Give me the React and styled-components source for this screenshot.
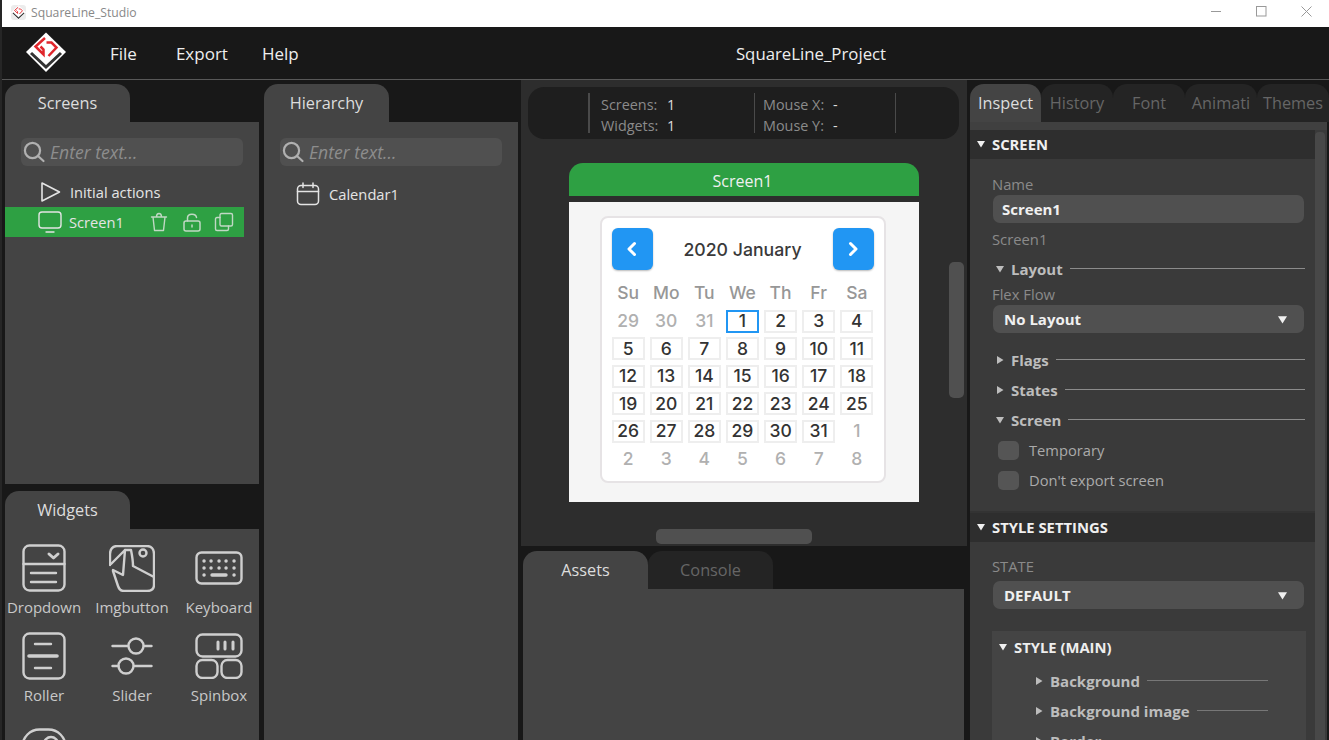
import React from "react";
import styled, { createGlobalStyle } from "styled-components";

const GlobalStyle = createGlobalStyle`
  html, body {
    margin: 0;
    padding: 0;
    height: 100%;
    overflow: hidden;
    background: #181818;
    font-family: "Open Sans", "Liberation Sans", sans-serif;
  }
  * { box-sizing: border-box; }
`;

const Window = styled.div`
  width: 1329px;
  height: 740px;
  display: flex;
  flex-direction: column;
  overflow: hidden;
  position: relative;
  border-left: 2px solid #262626;
`;

const TitleBar = styled.div`
  height: 27px;
  background: #fff;
  display: flex;
  align-items: center;
  padding-left: 9px;
  color: #888;
  font-size: 12.2px;
  flex: none;
`;

const TitleIcon = styled.div`
  width: 15px;
  height: 15px;
  border-radius: 3px;
  background: #ececec;
  margin-top: -3px;
  display: flex;
`;

const TitleText = styled.span`
  margin-left: 5px;
  margin-top: -2px;
`;

const WinButtons = styled.div`
  margin-left: auto;
  display: flex;
  align-items: center;
  color: #999;
`;

const WinButton = styled.svg`
  width: 11px;
  height: 11px;
  margin-right: ${(p) => p.$gap}px;
  margin-top: -5px;
  display: block;
`;

const MenuBar = styled.div`
  height: 53px;
  flex: none;
  background: #181818;
  border-bottom: 1px solid #585858;
  display: flex;
  align-items: center;
  position: relative;
  padding-left: 20px;
  color: #eee;
  font-size: 17px;
`;

const MenuItem = styled.span`
  margin-left: ${(p) => p.$left}px;
  margin-top: 1px;
`;

const ProjectName = styled.span`
  position: absolute;
  left: 291px;
  right: 0;
  top: 15px;
  text-align: center;
  font-size: 16.8px;
`;

const Main = styled.div`
  flex: 1;
  min-height: 0;
  display: flex;
  background: #181818;
`;

const SideColumn = styled.div`
  width: 254px;
  margin-left: ${(p) => p.$left}px;
  flex: none;
  display: flex;
  flex-direction: column;
  padding-top: 4px;
`;

const TabRow = styled.div`
  display: flex;
  height: 38px;
  flex: none;
  margin-top: ${(p) => p.$mt || 0}px;
`;

const Tab = styled.div`
  width: ${(p) => p.$w}px;
  height: 38px;
  flex: none;
  border-radius: 14px 14px 0 0;
  background: ${(p) => (p.$active ? "#444" : "#242424")};
  color: ${(p) => (p.$active ? "#ddd" : "#666")};
  display: flex;
  align-items: center;
  justify-content: center;
  font-size: 16.3px;
`;

const Panel = styled.div`
  background: #444;
  height: ${(p) => (p.$h ? `${p.$h}px` : "auto")};
  flex: ${(p) => (p.$h ? "none" : 1)};
  overflow: hidden;
  min-height: 0;
`;

const SearchBox = styled.div`
  margin: 16px 16px 0;
  height: 28px;
  border-radius: 6px;
  background: #505050;
  display: flex;
  align-items: center;
  padding-left: 1px;
  color: #8d8d8d;
  font-style: italic;
  font-size: 17.6px;
`;

const SearchText = styled.span`
  margin-left: 4px;
  margin-top: -1px;
`;

const TreeRow = styled.div`
  height: 30px;
  display: flex;
  align-items: center;
  margin-top: ${(p) => p.$mt || 0}px;
  padding-left: ${(p) => p.$pl}px;
  color: #e4e4e4;
  font-size: 14.7px;
  width: 239px;
  background: ${(p) => (p.$selected ? "#2ea043" : "transparent")};
`;

const TreeLabel = styled.span`
  margin-left: ${(p) => p.$left}px;
`;

const RowIcons = styled.div`
  margin-left: auto;
  display: flex;
  gap: 12.5px;
  padding-right: 10px;
  color: #c0d8c4;
`;

const WidgetGrid = styled.div`
  display: grid;
  grid-template-columns: 78px 98px 76px;
  grid-auto-rows: 88px;
  padding-top: 15px;
`;

const WidgetCell = styled.div`
  display: flex;
  flex-direction: column;
  align-items: center;
  color: #c8c8c8;
  font-size: 15px;
`;

const IconSlot = styled.div`
  height: 48px;
  flex: none;
  display: flex;
  align-items: center;
  justify-content: center;
  margin-top: ${(p) => p.$top || 0}px;
  color: #cfcfcf;
`;

const WidgetLabel = styled.span`
  margin-top: 5px;
  line-height: 20px;
  white-space: nowrap;
`;

const Center = styled.div`
  width: 446px;
  margin-left: 3px;
  flex: none;
  display: flex;
  flex-direction: column;
`;

const Canvas = styled.div`
  height: 466px;
  flex: none;
  background: #2d2d2d;
  position: relative;
  display: flex;
  flex-direction: column;
  align-items: center;
  padding: 7px 8px 0 7px;
`;

const StatusPill = styled.div`
  align-self: stretch;
  height: 52px;
  flex: none;
  border-radius: 16px;
  background: #1e1e1e;
  display: flex;
  align-items: center;
  padding-left: 60px;
  color: #8b8b8b;
  font-size: 14.4px;
`;

const StatusGroup = styled.div`
  height: 40px;
  border-left: ${(p) => (p.$thin ? 1 : 2)}px solid #4a4a4a;
  ${(p) => p.$end && "border-right: 1px solid #4a4a4a;"}
  width: ${(p) => p.$w}px;
  padding-left: ${(p) => p.$pl}px;
  padding-top: 4px;
  display: grid;
  grid-template-columns: ${(p) => p.$label}px 1fr;
  grid-auto-rows: 21px;
  align-content: center;
  line-height: 21px;
`;

const StatusValue = styled.span`
  color: #ddd;
`;

const ScreenFrame = styled.div`
  width: 350px;
  margin-top: 24px;
`;

const ScreenHeader = styled.div`
  height: 33px;
  background: #2ea043;
  border-radius: 14px 14px 0 0;
  color: #f0f0f0;
  font-size: 16px;
  padding: 2px 2px 0 0;
  display: flex;
  align-items: center;
  justify-content: center;
`;

const ScreenBody = styled.div`
  margin-top: 6px;
  height: 300px;
  background: #f5f5f5;
  padding: 14px 33px 0 31px;
`;

const CalendarCard = styled.div`
  height: 267px;
  background: #fff;
  border: 2px solid #e6e3e5;
  border-radius: 8px;
  padding: 10px 10px 0;
  font-family: Inter, "Noto Sans", sans-serif;
`;

const CalendarHead = styled.div`
  display: flex;
  align-items: center;
  justify-content: space-between;
  height: 42px;
  color: #3a3a3a;
  font-size: 17.7px;
  font-weight: 500;
`;

const CalendarTitle = styled.span`
  padding-top: 1px;
`;

const NavButton = styled.div`
  width: 41px;
  height: 42px;
  border-radius: 6px;
  background: #2196f3;
  box-shadow: 0 1px 2px #b9b9b9;
  display: flex;
  align-items: center;
  justify-content: center;
  color: #fff;
`;

const DayGrid = styled.div`
  display: grid;
  grid-template-columns: repeat(7, 33.14px);
  column-gap: 5px;
  grid-auto-rows: 23px;
  row-gap: 4.5px;
`;

const WeekRow = styled(DayGrid)`
  margin-top: 13px;
  margin-bottom: 6.5px;
  height: 20px;
`;

const WeekDay = styled.span`
  text-align: center;
  color: #979797;
  font-size: 17.5px;
  font-weight: 500;
  line-height: 20px;
`;

const DayCell = styled.div`
  border: ${(p) => (p.$today ? "2px solid #2196f3" : p.$muted ? "0" : "2px solid #eee")};
  color: ${(p) => (p.$muted ? "#b0b0b0" : "#333")};
  font-size: 17.5px;
  font-weight: 500;
  line-height: 1;
  display: flex;
  align-items: center;
  justify-content: center;
`;

const VScroll = styled.div`
  position: absolute;
  left: 428px;
  top: 182px;
  width: 15px;
  height: 136px;
  background: #505050;
  border-radius: 5px;
`;

const HScroll = styled.div`
  position: absolute;
  left: 135px;
  top: 449px;
  width: 156px;
  height: 15px;
  background: #505050;
  border-radius: 5px;
`;

const BottomArea = styled.div`
  flex: 1;
  min-height: 0;
  padding: 5px 3px 0 2px;
  display: flex;
  flex-direction: column;
`;

const Inspector = styled.div`
  flex: 1;
  min-width: 0;
  margin-left: 3px;
  padding-top: 4px;
  display: flex;
  flex-direction: column;
  position: relative;
`;

const InspectBody = styled.div`
  flex: 1;
  min-height: 0;
  background: #3a3a3a;
  border-top: 8px solid #404040;
  overflow: hidden;
  width: 357px;
`;

const SectionBar = styled.div`
  height: 29px;
  background: #2e2e2e;
  display: flex;
  align-items: center;
  color: #f0f0f0;
  font-weight: 700;
  font-size: 14.8px;
  padding-left: 7px;
  padding-bottom: 2px;
  width: 345px;
`;

const SectionName = styled.span`
  margin-left: 7px;
`;

const FieldStack = styled.div`
  width: 345px;
  padding: ${(p) => p.$pad};
  border-bottom: ${(p) => (p.$line ? "2px solid #333" : "0")};
`;

const FieldLabel = styled.div`
  color: #8a8a8a;
  font-size: 14.8px;
  line-height: 20px;
  height: 20px;
  margin-top: ${(p) => p.$mt || 0}px;
  margin-bottom: ${(p) => p.$mb || 0}px;
`;

const InputBar = styled.div`
  width: 311px;
  height: 28px;
  margin-left: 1px;
  border-radius: 7px;
  background: #505050;
  color: #f0f0f0;
  font-weight: 700;
  font-size: 15px;
  display: flex;
  align-items: center;
  padding: 0 17px 0 ${(p) => p.$pl}px;
  justify-content: space-between;
`;

const GroupRow = styled.div`
  display: flex;
  align-items: center;
  height: 30px;
  margin-top: ${(p) => p.$mt || 0}px;
  color: #bdbdbd;
  font-weight: 700;
  font-size: 15px;
  padding-left: ${(p) => p.$pl}px;
  width: ${(p) => p.$w}px;
`;

const GroupName = styled.span`
  margin-left: 7px;
  white-space: nowrap;
`;

const GroupRule = styled.div`
  flex: 1;
  height: 1px;
  margin-left: 7px;
  margin-top: -2px;
  background: ${(p) => p.$color || "#8b8b8b"};
`;

const CheckRow = styled.div`
  height: 30px;
  display: flex;
  align-items: center;
  padding-left: 6px;
  color: #aaa;
  font-size: 14.7px;
`;

const CheckBox = styled.div`
  width: 21px;
  height: 19px;
  border-radius: 5px;
  background: #555;
  margin-right: 10px;
`;

const StyleBlock = styled.div`
  width: 314px;
  margin-top: 22px;
  background: #444;
`;

const StyleTitle = styled.div`
  height: 32px;
  margin-bottom: 3px;
  display: flex;
  align-items: center;
  padding-left: 7px;
  color: #eee;
  font-weight: 700;
  font-size: 14.8px;
`;

const InspectScroll = styled.div`
  position: absolute;
  left: 345px;
  top: 52px;
  width: 10px;
  height: 640px;
  background: #484848;
  border-radius: 4px;
`;

const Arrow = ({ dir = "down", size = 8, color = "#f0f0f0" }) => (
  <svg width={size} height={size} viewBox="0 0 8 8" style={{ flex: "none" }}>
    <path d={dir === "down" ? "M0 1H8L4 7.5Z" : "M1 0V8L7.5 4Z"} fill={color} />
  </svg>
);

const Logo = ({ size, crop }) => (
  <svg width={size} height={size} viewBox={crop ? "4 3 40 40" : "0 0 48 48"} style={{ display: "block", flex: "none" }}>
    <path d="M24 3.5L44 23L24 43L4 23Z" fill="#fff" />
    <path d="M9 24L24 38L39 24" fill="none" stroke="#333" strokeWidth="3" />
    <path d="M23 9L13.5 17.5L21.5 25.5V20.5L18.5 17.5" fill="none" stroke="#e0262c" strokeWidth="2.5" />
    <path d="M24.5 13.5H29.5L34.5 18.5L26.5 27" fill="none" stroke="#e0262c" strokeWidth="2.5" />
  </svg>
);

const Stroke = ({ w, h, sw = 2.4, children }) => (
  <svg width={w} height={h} viewBox={`0 0 ${w} ${h}`} fill="none" stroke="currentColor" strokeWidth={sw} strokeLinecap="round" strokeLinejoin="round" style={{ display: "block", flex: "none" }}>
    {children}
  </svg>
);

const SearchIcon = () => (
  <svg width="24" height="24" viewBox="0 0 24 24" fill="none" stroke="#b0b0b0" strokeWidth="2.2" strokeLinecap="round">
    <circle cx="10.5" cy="10.5" r="7.6" />
    <path d="M16 16L21.5 21" />
  </svg>
);

const widgets = [
  {
    name: "Dropdown",
    icon: (
      <Stroke w={44} h={48}>
        <rect x="1.5" y="1.5" width="41" height="45" rx="6" />
        <path d="M1.5 20H42.5M9 29H34M9 38H34" />
        <path d="M27 10L31.5 14L36 10" strokeWidth="3" />
      </Stroke>
    ),
  },
  {
    name: "Imgbutton",
    icon: (
      <Stroke w={46} h={47}>
        <path d="M1 20V9C1 4 4 1 8 1H38C42 1 45 4 45 9V40C45 44 42 46 38 46H15C12 46 10 44 9 41L4 26" />
        <path d="M2 19L16 5L14 30L4 25" />
        <path d="M16 5H22C23 10 24 15 24 21L45 32" />
        <circle cx="34" cy="8" r="3.5" />
      </Stroke>
    ),
  },
  {
    name: "Keyboard",
    icon: (
      <Stroke w={48} h={34}>
        <rect x="1.5" y="1.5" width="45" height="31" rx="5" />
        <path d="M9 10H9.1M16 10H16.1M24 10H24.1M31 10H31.1M39 10H39.1M9 17H9.1M16 17H16.1M24 17H24.1M31 17H31.1M39 17H39.1M9 24H9.1M39 24H39.1" strokeWidth="3.4" />
        <path d="M17 24H31" strokeWidth="3.4" />
      </Stroke>
    ),
  },
  {
    name: "Roller",
    icon: (
      <Stroke w={44} h={48}>
        <rect x="1.5" y="1.5" width="41" height="45" rx="6" />
        <path d="M13 12H29M13 36H29" />
        <path d="M7 24H35" strokeWidth="3.6" />
      </Stroke>
    ),
  },
  {
    name: "Slider",
    icon: (
      <Stroke w={42} h={38}>
        <circle cx="25" cy="9" r="7.5" />
        <circle cx="15" cy="29" r="7.5" />
        <path d="M1.5 9H17M33 9H40.5M1.5 29H7.5M23 29H40.5" />
      </Stroke>
    ),
  },
  {
    name: "Spinbox",
    icon: (
      <Stroke w={48} h={46}>
        <rect x="1.5" y="1.5" width="45" height="22" rx="6" />
        <rect x="1.5" y="27" width="21" height="18" rx="6" />
        <rect x="26.5" y="27" width="20" height="18" rx="6" />
        <path d="M23 9V16M30 9V16M38 9V16" strokeWidth="3" />
      </Stroke>
    ),
  },
  {
    top: 8,
    icon: (
      <Stroke w={46} h={48}>
        <rect x="1.5" y="1.5" width="43" height="45" rx="17" />
        <circle cx="30" cy="16" r="7" />
      </Stroke>
    ),
  },
];

const weekDays = ["Su", "Mo", "Tu", "We", "Th", "Fr", "Sa"];

const days = [
  ...[29, 30, 31].map((d) => ({ d, muted: true })),
  ...Array.from({ length: 31 }, (_, i) => ({ d: i + 1, today: i === 0 })),
  ...[1, 2, 3, 4, 5, 6, 7, 8].map((d) => ({ d, muted: true })),
];

function Calendar() {
  return (
    <CalendarCard>
      <CalendarHead>
        <NavButton>
          <Stroke w={16} h={16} sw={3}>
            <path d="M10.5 2.5L5 8L10.5 13.5" />
          </Stroke>
        </NavButton>
        <CalendarTitle>2020 January</CalendarTitle>
        <NavButton>
          <Stroke w={16} h={16} sw={3}>
            <path d="M5.5 2.5L11 8L5.5 13.5" />
          </Stroke>
        </NavButton>
      </CalendarHead>
      <WeekRow>
        {weekDays.map((w) => (
          <WeekDay key={w}>{w}</WeekDay>
        ))}
      </WeekRow>
      <DayGrid>
        {days.map((c, i) => (
          <DayCell key={i} $muted={c.muted} $today={c.today}>
            {c.d}
          </DayCell>
        ))}
      </DayGrid>
    </CalendarCard>
  );
}

function ScreensPanel() {
  return (
    <>
      <SearchBox>
        <SearchIcon />
        <SearchText>Enter text...</SearchText>
      </SearchBox>
      <TreeRow $pl={36} $mt={11}>
        <Stroke w={20} h={20} sw={1.6}>
          <path d="M1 1V19L18.5 10Z" />
        </Stroke>
        <TreeLabel $left={9}>Initial actions</TreeLabel>
      </TreeRow>
      <TreeRow $pl={33} $selected>
        <Stroke w={24} h={22} sw={1.4}>
          <rect x="1" y="1" width="22" height="16" rx="3" />
          <path d="M8 21H16" />
        </Stroke>
        <TreeLabel $left={7}>Screen1</TreeLabel>
        <RowIcons>
          <Stroke w={20} h={20} sw={1.4}>
            <path d="M2.5 5H17.5M7.5 5C7.5 2.5 8.5 1.5 10 1.5S12.5 2.5 12.5 5M4 5L5.5 18.5H14.5L16 5" />
          </Stroke>
          <Stroke w={20} h={20} sw={1.5}>
            <rect x="2" y="9" width="16" height="10" rx="2" />
            <path d="M5.5 9V6C5.5 1 14 1 14.5 5.5" />
            <path d="M10 13V15" />
          </Stroke>
          <Stroke w={20} h={20} sw={1.4}>
            <rect x="6" y="1.5" width="12.5" height="12.5" rx="1.5" />
            <path d="M6 5.5H3C2 5.5 1.5 6 1.5 7V17C1.5 18 2 18.5 3 18.5H13C14 18.5 14.5 18 14.5 17V14" />
          </Stroke>
        </RowIcons>
      </TreeRow>
    </>
  );
}

function HierarchyPanel() {
  return (
    <Panel>
      <SearchBox>
        <SearchIcon />
        <SearchText>Enter text...</SearchText>
      </SearchBox>
      <TreeRow $pl={32} $mt={13}>
        <Stroke w={24} h={24} sw={1.5}>
          <rect x="1.5" y="3.5" width="21" height="19" rx="3.5" />
          <path d="M1.5 9.5H22.5M7 1V5.5M17 1V5.5" />
        </Stroke>
        <TreeLabel $left={9}>Calendar1</TreeLabel>
      </TreeRow>
    </Panel>
  );
}

function InspectPanel() {
  return (
    <InspectBody>
      <SectionBar>
        <Arrow />
        <SectionName>SCREEN</SectionName>
      </SectionBar>
      <FieldStack $pad="15px 0 16px 22px" $line>
        <FieldLabel $mb={1}>Name</FieldLabel>
        <InputBar $pl={9}>Screen1</InputBar>
        <FieldLabel $mt={6}>Screen1</FieldLabel>
        <GroupRow $pl={4} $w={313} $mt={5}>
          <Arrow color="#bdbdbd" />
          <GroupName>Layout</GroupName>
          <GroupRule />
        </GroupRow>
        <FieldLabel $mb={1}>Flex Flow</FieldLabel>
        <InputBar $pl={11}>
          No Layout
          <Arrow size={9} />
        </InputBar>
        <GroupRow $pl={4} $w={313} $mt={12}>
          <Arrow dir="right" color="#bdbdbd" />
          <GroupName>Flags</GroupName>
          <GroupRule />
        </GroupRow>
        <GroupRow $pl={4} $w={313}>
          <Arrow dir="right" color="#bdbdbd" />
          <GroupName>States</GroupName>
          <GroupRule />
        </GroupRow>
        <GroupRow $pl={4} $w={313}>
          <Arrow color="#bdbdbd" />
          <GroupName>Screen</GroupName>
          <GroupRule />
        </GroupRow>
        <CheckRow>
          <CheckBox />
          Temporary
        </CheckRow>
        <CheckRow>
          <CheckBox />
          Don't export screen
        </CheckRow>
      </FieldStack>
      <SectionBar>
        <Arrow />
        <SectionName>STYLE SETTINGS</SectionName>
      </SectionBar>
      <FieldStack $pad="14px 0 0 22px">
        <FieldLabel $mb={5}>STATE</FieldLabel>
        <InputBar $pl={11}>
          DEFAULT
          <Arrow size={9} />
        </InputBar>
        <StyleBlock>
          <StyleTitle>
            <Arrow />
            <SectionName>STYLE (MAIN)</SectionName>
          </StyleTitle>
          <GroupRow $pl={43} $w={276}>
            <Arrow dir="right" color="#bdbdbd" />
            <GroupName>Background</GroupName>
            <GroupRule $color="#777" />
          </GroupRow>
          <GroupRow $pl={43} $w={276}>
            <Arrow dir="right" color="#bdbdbd" />
            <GroupName>Background image</GroupName>
            <GroupRule $color="#777" />
          </GroupRow>
          <GroupRow $pl={43} $w={276}>
            <Arrow dir="right" color="#bdbdbd" />
            <GroupName>Border</GroupName>
          </GroupRow>
        </StyleBlock>
      </FieldStack>
      <InspectScroll />
    </InspectBody>
  );
}

export default function App() {
  return (
    <>
      <GlobalStyle />
      <Window>
        <TitleBar>
          <TitleIcon>
            <Logo size={15} crop />
          </TitleIcon>
          <TitleText>SquareLine_Studio</TitleText>
          <WinButtons>
            <WinButton $gap={34} viewBox="0 0 11 11">
              <path d="M0 5.5H10" stroke="currentColor" strokeWidth="1" />
            </WinButton>
            <WinButton $gap={34} viewBox="0 0 11 11">
              <rect x=".5" y=".5" width="9.5" height="9.5" fill="none" stroke="currentColor" />
            </WinButton>
            <WinButton $gap={17} viewBox="0 0 11 11">
              <path d="M.5 .5L10.5 10.5M10.5 .5L.5 10.5" stroke="currentColor" />
            </WinButton>
          </WinButtons>
        </TitleBar>
        <MenuBar>
          <Logo size={48} />
          <MenuItem $left={40}>File</MenuItem>
          <MenuItem $left={39}>Export</MenuItem>
          <MenuItem $left={34}>Help</MenuItem>
          <ProjectName>SquareLine_Project</ProjectName>
        </MenuBar>
        <Main>
          <SideColumn $left={3}>
            <TabRow>
              <Tab $w={125} $active>Screens</Tab>
            </TabRow>
            <Panel $h={362}>
              <ScreensPanel />
            </Panel>
            <TabRow $mt={7}>
              <Tab $w={125} $active>Widgets</Tab>
            </TabRow>
            <Panel>
              <WidgetGrid>
                {widgets.map((w, i) => (
                  <WidgetCell key={i}>
                    <IconSlot $top={w.top}>{w.icon}</IconSlot>
                    {w.name && <WidgetLabel>{w.name}</WidgetLabel>}
                  </WidgetCell>
                ))}
              </WidgetGrid>
            </Panel>
          </SideColumn>
          <SideColumn $left={5}>
            <TabRow>
              <Tab $w={125} $active>Hierarchy</Tab>
            </TabRow>
            <HierarchyPanel />
          </SideColumn>
          <Center>
            <Canvas>
              <StatusPill>
                <StatusGroup $w={166} $pl={11} $label={66}>
                  <span>Screens:</span>
                  <StatusValue>1</StatusValue>
                  <span>Widgets:</span>
                  <StatusValue>1</StatusValue>
                </StatusGroup>
                <StatusGroup $w={142} $pl={8} $label={70} $thin $end>
                  <span>Mouse X:</span>
                  <StatusValue>-</StatusValue>
                  <span>Mouse Y:</span>
                  <StatusValue>-</StatusValue>
                </StatusGroup>
              </StatusPill>
              <ScreenFrame>
                <ScreenHeader>Screen1</ScreenHeader>
                <ScreenBody>
                  <Calendar />
                </ScreenBody>
              </ScreenFrame>
              <VScroll />
              <HScroll />
            </Canvas>
            <BottomArea>
              <TabRow>
                <Tab $w={125} $active>Assets</Tab>
                <Tab $w={125}>Console</Tab>
              </TabRow>
              <Panel />
            </BottomArea>
          </Center>
          <Inspector>
            <TabRow>
              <Tab $w={71} $active>Inspect</Tab>
              <Tab $w={72}>History</Tab>
              <Tab $w={72}>Font</Tab>
              <Tab $w={72}>Animati</Tab>
              <Tab $w={72}>Themes</Tab>
            </TabRow>
            <InspectPanel />
          </Inspector>
        </Main>
      </Window>
    </>
  );
}
